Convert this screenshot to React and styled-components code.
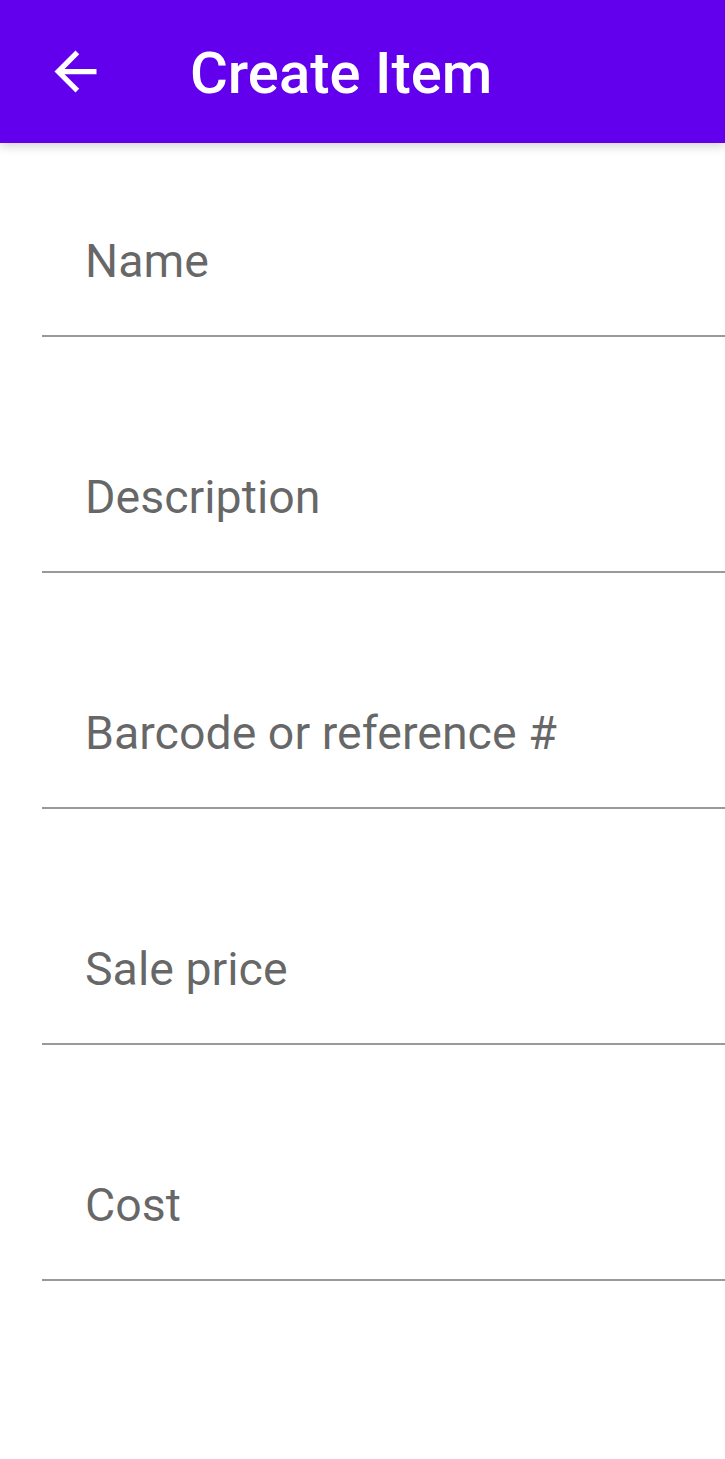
import React from "react";
import styled, { createGlobalStyle } from "styled-components";

const Global = createGlobalStyle`
  html, body { margin: 0; padding: 0; background: #ffffff; }
  body { font-family: Roboto, "Noto Sans", sans-serif; overflow: hidden; }
`;

const Screen = styled.div`
  width: 725px;
  min-height: 1459px;
  background: #ffffff;
  display: flex;
  flex-direction: column;
`;

const AppBar = styled.header`
  position: relative;
  z-index: 1;
  height: 143px;
  background: #6200ee;
  display: flex;
  align-items: center;
  padding-left: 44px;
  box-shadow: 0 3px 10px rgba(0, 0, 0, 0.18);
`;

const BackButton = styled.button`
  width: 63px;
  height: 63px;
  padding: 0;
  border: 0;
  background: transparent;
  color: #ffffff;
  display: flex;
  align-items: center;
  justify-content: center;
  svg { display: block; }
`;

const Title = styled.h1`
  margin: 2px 0 0 83px;
  font-family: Roboto, sans-serif;
  font-weight: 500;
  font-size: 58px;
  color: #ffffff;
  letter-spacing: 0;
`;

const Form = styled.div`
  display: flex;
  flex-direction: column;
  gap: 42px;
  padding-left: 42px;
`;

const Field = styled.label`
  height: 194px;
  box-sizing: border-box;
  border-bottom: 2px solid rgba(0, 0, 0, 0.4);
  display: flex;
  align-items: flex-end;
  padding: 0 0 46px 43px;
`;

const Label = styled.span`
  font-family: Roboto, sans-serif;
  font-size: 46.5px;
  line-height: 56px;
  color: rgba(0, 0, 0, 0.6);
`;

const ArrowBack = () => (
  <svg width="63" height="63" viewBox="0 0 24 24" fill="currentColor">
    <path d="M20 11H7.83l5.59-5.59L12 4l-8 8 8 8 1.41-1.41L7.83 13H20v-2z" />
  </svg>
);

const fields = ["Name", "Description", "Barcode or reference #", "Sale price", "Cost"];

export default function App() {
  return (
    <>
      <Global />
      <Screen>
        <AppBar>
          <BackButton aria-label="Back">
            <ArrowBack />
          </BackButton>
          <Title>Create Item</Title>
        </AppBar>
        <Form>
          {fields.map((f) => (
            <Field key={f}>
              <Label>{f}</Label>
            </Field>
          ))}
        </Form>
      </Screen>
    </>
  );
}
